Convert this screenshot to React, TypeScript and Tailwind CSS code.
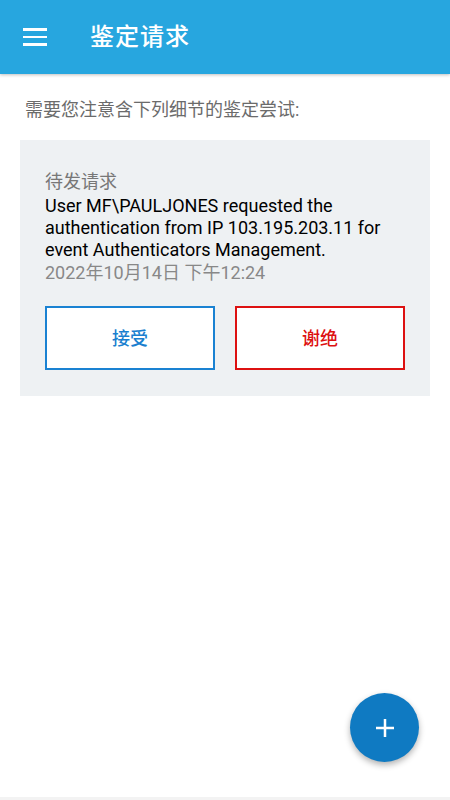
import React from 'react';

const font = { fontFamily: 'Roboto, "Noto Sans CJK SC", sans-serif' };

const App: React.FC = () => {
  return (
    <div className="relative w-[450px] h-[800px] bg-white overflow-hidden" style={font}>
      {/* 顶栏 */}
      <div className="h-[74px] bg-[#27a6df] flex items-center shadow-[0_1px_3px_rgba(0,0,0,0.25)]">
        <div className="w-[24px] ml-[23px] flex flex-col gap-[5px]">
          <span className="block h-[2.5px] bg-white"></span>
          <span className="block h-[2.5px] bg-white"></span>
          <span className="block h-[2.5px] bg-white"></span>
        </div>
        <h1 className="ml-[43px] text-[24px] font-medium text-white tracking-[1px]">鉴定请求</h1>
      </div>

      <p className="px-[25px] pt-[24px] text-[18px] text-[#6b6b6b] leading-[24px]">需要您注意含下列细节的鉴定尝试:</p>

      {/* 请求卡片 */}
      <div className="mx-[20px] mt-[18px] bg-[#eef1f3] px-[25px] pt-[29px] pb-[26px]">
        <div className="text-[18px] text-[#777] leading-[26px]">待发请求</div>
        <div className="text-[18px] text-black leading-[22px]">
          User MF\PAULJONES requested the authentication from IP 103.195.203.11 for event Authenticators Management.
        </div>
        <div className="text-[18px] text-[#888] leading-[24px]">2022年10月14日 下午12:24</div>
        <div className="mt-[21px] grid grid-cols-2 gap-[20px]">
          <button className="h-[64px] bg-white border-[2.5px] border-[#1a82d2] text-[#1a7fcf] text-[18px] font-medium">接受</button>
          <button className="h-[64px] bg-white border-[2.5px] border-[#dd1111] text-[#dd1111] text-[18px] font-medium">谢绝</button>
        </div>
      </div>

      {/* 浮动按钮 */}
      <button className="absolute left-[350px] top-[693px] w-[69px] h-[69px] rounded-full bg-[#0f7ac2] flex items-center justify-center shadow-[0_3px_6px_rgba(0,0,0,0.3)]">
        <svg width="20" height="20" viewBox="0 0 20 20">
          <path d="M10 1v18M1 10h18" stroke="white" strokeWidth="2.5" />
        </svg>
      </button>
      <div className="absolute bottom-0 left-0 w-full h-[3px] bg-[#f3f3f3]"></div>
    </div>
  );
};

export default App;
